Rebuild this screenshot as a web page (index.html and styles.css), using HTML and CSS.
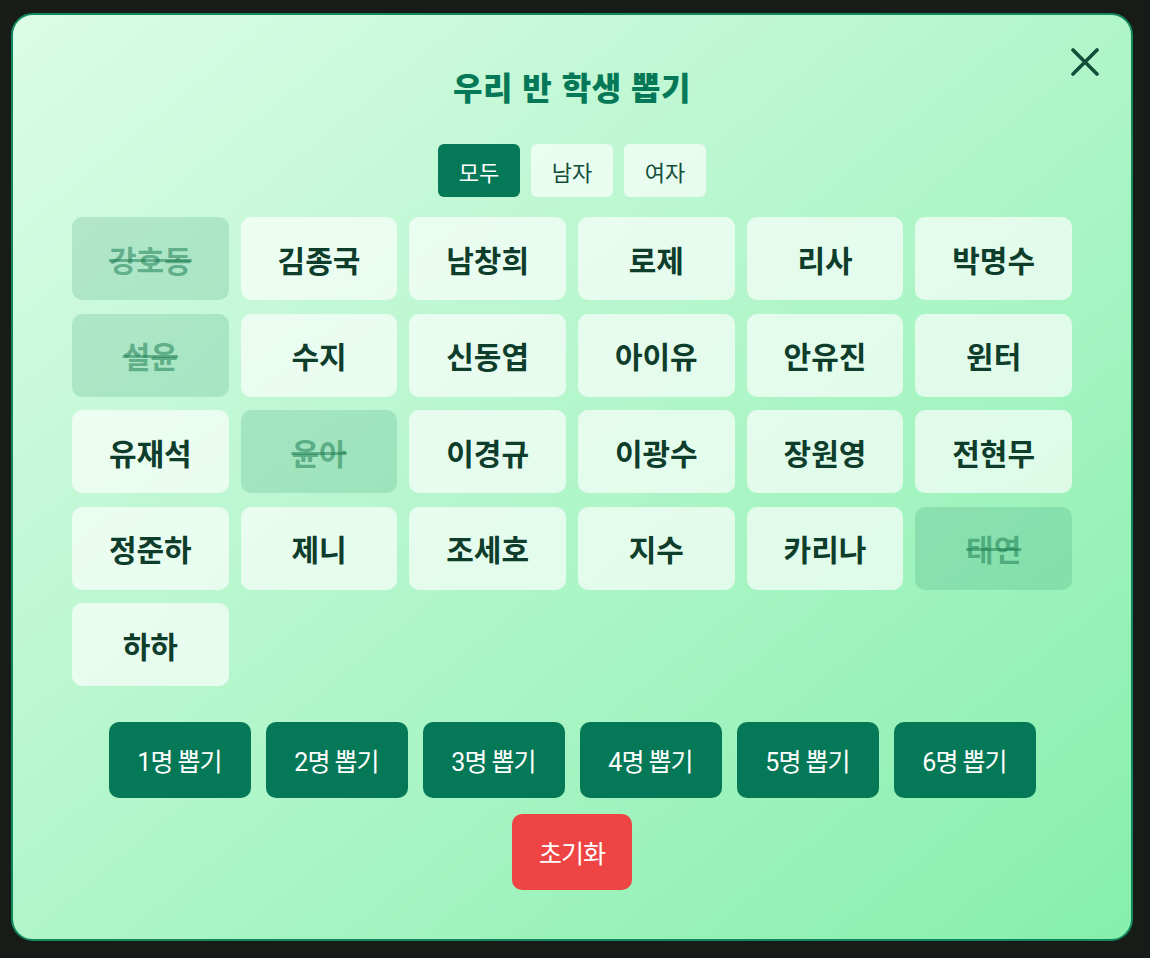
FILE: index.html
```html
<!DOCTYPE html>
<html lang="ko">
<head>
<meta charset="utf-8">
<title>우리 반 학생 뽑기</title>
<link rel="stylesheet" href="styles.css">
</head>
<body>
<div class="modal">
  <button class="close" aria-label="닫기">
    <svg viewBox="0 0 28 28" width="28" height="28"><path d="M2 2 L26 26 M26 2 L2 26" stroke="#134e3a" stroke-width="3.6" stroke-linecap="round" fill="none"/></svg>
  </button>
  <h1 class="title">우리 반 학생 뽑기</h1>
  <div class="filters">
    <button class="filter active">모두</button>
    <button class="filter">남자</button>
    <button class="filter">여자</button>
  </div>
  <div class="grid">
    <div class="cell picked">강호동</div>
    <div class="cell">김종국</div>
    <div class="cell">남창희</div>
    <div class="cell">로제</div>
    <div class="cell">리사</div>
    <div class="cell">박명수</div>
    <div class="cell picked">설윤</div>
    <div class="cell">수지</div>
    <div class="cell">신동엽</div>
    <div class="cell">아이유</div>
    <div class="cell">안유진</div>
    <div class="cell">윈터</div>
    <div class="cell">유재석</div>
    <div class="cell picked">윤아</div>
    <div class="cell">이경규</div>
    <div class="cell">이광수</div>
    <div class="cell">장원영</div>
    <div class="cell">전현무</div>
    <div class="cell">정준하</div>
    <div class="cell">제니</div>
    <div class="cell">조세호</div>
    <div class="cell">지수</div>
    <div class="cell">카리나</div>
    <div class="cell picked">태연</div>
    <div class="cell">하하</div>
  </div>
  <div class="actions">
    <button class="pick">1명 뽑기</button>
    <button class="pick">2명 뽑기</button>
    <button class="pick">3명 뽑기</button>
    <button class="pick">4명 뽑기</button>
    <button class="pick">5명 뽑기</button>
    <button class="pick">6명 뽑기</button>
  </div>
  <div class="reset-row">
    <button class="reset">초기화</button>
  </div>
</div>
</body>
</html>
```

FILE: styles.css
```css
* { box-sizing: border-box; }
html, body { margin: 0; }
body {
  background: #171c19;
  padding: 13px 17px 17px 11px;
  font-family: Roboto, "Noto Sans CJK KR", sans-serif;
}
button { font-family: inherit; border: none; cursor: pointer; }
.modal {
  position: relative;
  height: 928px;
  border: 2px solid #12885c;
  border-radius: 22px;
  background: linear-gradient(to bottom right, #dcfce7, #86efac);
  padding: 50px 59px 50px 59px;
  display: flex;
  flex-direction: column;
  align-items: center;
}
.close {
  position: absolute;
  top: 33px;
  right: 32px;
  width: 28px;
  height: 28px;
  padding: 0;
  background: transparent;
  display: flex;
}
.title {
  margin: 0;
  font-family: "Noto Sans CJK KR", sans-serif;
  font-weight: 900;
  font-size: 32px;
  line-height: 42px;
  color: #047857;
  letter-spacing: 0.5px;
}
.filters {
  margin-top: 37px;
  display: flex;
  gap: 11px;
}
.filter {
  height: 53px;
  width: 82px;
  padding: 0;
  border-radius: 6px;
  font-size: 22px;
  font-family: "Noto Sans CJK KR", sans-serif;
  background: rgba(255, 255, 255, 0.65);
  color: #134e3a;
}
.filter.active {
  background: #047857;
  color: #ffffff;
}
.grid {
  margin-top: 20px;
  width: 100%;
  display: grid;
  grid-template-columns: repeat(6, 1fr);
  grid-auto-rows: 83px;
  column-gap: 12px;
  row-gap: 13.5px;
}
.cell {
  display: flex;
  align-items: center;
  justify-content: center;
  border-radius: 10px;
  background: rgba(255, 255, 255, 0.66);
  font-family: "Noto Sans CJK KR", serif;
  font-weight: 700;
  font-size: 30px;
  color: #0e3d2b;
}
.cell.picked {
  background: rgba(4, 120, 87, 0.15);
  color: rgba(22, 120, 78, 0.5);
  text-decoration: line-through;
  text-decoration-thickness: 3px;
}
.actions {
  margin-top: 36px;
  display: flex;
  gap: 15px;
}
.pick {
  height: 76px;
  width: 142px;
  border-radius: 10px;
  background: #047857;
  color: #ffffff;
  font-size: 25px;
  letter-spacing: -1px;
}
.reset-row {
  margin-top: 16px;
  display: flex;
}
.reset {
  height: 76px;
  width: 120px;
  border-radius: 10px;
  background: #ef4444;
  color: #ffffff;
  font-size: 25px;
  letter-spacing: -1px;
}
```
